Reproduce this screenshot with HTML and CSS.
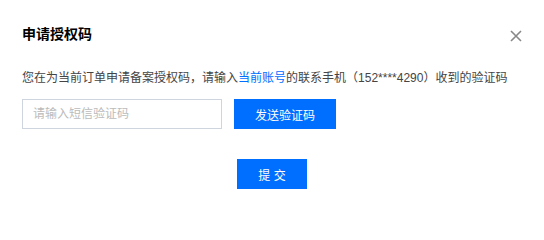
FILE: index.html
```html
<!DOCTYPE html>
<html lang="zh-CN">
<head>
<meta charset="utf-8">
<title>申请授权码</title>
<link rel="stylesheet" href="styles.css">
</head>
<body>
<div class="dialog">
  <div class="header">
    <h3 class="title">申请授权码</h3>
    <button class="close" aria-label="关闭">
      <svg width="12" height="12" viewBox="0 0 12 12"><path d="M1 1L11 11M11 1L1 11" stroke="#888" stroke-width="1.6" fill="none"/></svg>
    </button>
  </div>
  <p class="desc">您在为当前订单申请备案授权码，请输入<a class="link" href="#">当前账号</a>的联系手机（152****4290）收到的验证码</p>
  <div class="row">
    <input class="input" type="text" placeholder="请输入短信验证码">
    <button class="btn btn-send">发送验证码</button>
  </div>
  <div class="footer">
    <button class="btn btn-submit">提 交</button>
  </div>
</div>
</body>
</html>
```

FILE: styles.css
```css
html, body {
  margin: 0;
  padding: 0;
  background: #fff;
}
body {
  font-family: "Liberation Sans", "Noto Sans CJK SC", sans-serif;
  color: #444;
}
.dialog {
  width: 544px;
  height: 208px;
  box-sizing: border-box;
  padding: 24px 22px 0;
}
.header {
  display: flex;
  align-items: center;
  justify-content: space-between;
  height: 20px;
}
.title {
  margin: 0;
  font-size: 14px;
  line-height: 20px;
  font-weight: 600;
  color: #000;
}
.close {
  border: 0;
  background: none;
  padding: 0;
  width: 12px;
  height: 12px;
  display: flex;
  cursor: pointer;
  margin-top: 4px;
}
.desc {
  margin: 25px 0 0;
  font-size: 12px;
  line-height: 18px;
  color: #444;
  white-space: nowrap;
}
.link {
  color: #006eff;
  text-decoration: none;
}
.row {
  display: flex;
  gap: 12px;
  margin-top: 12px;
}
.input {
  box-sizing: border-box;
  width: 200px;
  height: 30px;
  border: 1px solid #cfd5de;
  border-radius: 0;
  padding: 0 10px;
  font-family: inherit;
  font-size: 12px;
  color: #444;
  outline: none;
}
.input::placeholder {
  color: #bbb;
}
.btn {
  border: 0;
  border-radius: 0;
  background: #006eff;
  color: #fff;
  font-family: inherit;
  font-size: 12px;
  height: 30px;
  padding: 0;
  cursor: pointer;
}
.btn-send {
  width: 102px;
}
.footer {
  display: flex;
  justify-content: center;
  margin-top: 30px;
}
.btn-submit {
  width: 70px;
}
```
